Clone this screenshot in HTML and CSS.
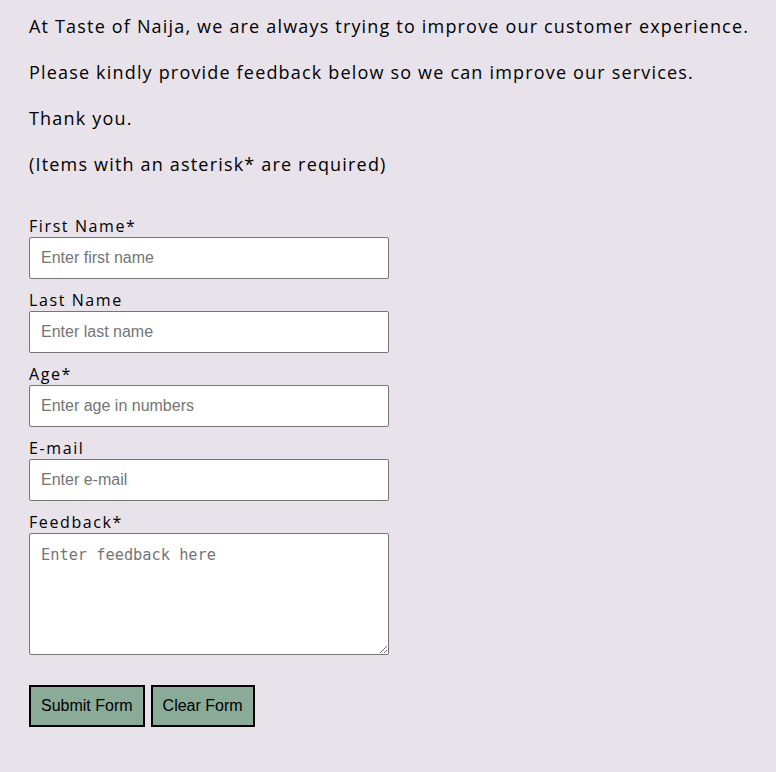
FILE: index.html
```html
<!DOCTYPE html>
<html lang="en">
<head>
<meta charset="utf-8">
<title>Feedback - Taste of Naija</title>
<link rel="stylesheet" href="styles.css">
</head>
<body>
<main class="page">
  <section class="intro">
    <p>At Taste of Naija, we are always trying to improve our customer experience.</p>
    <p>Please kindly provide feedback below so we can improve our services.</p>
    <p>Thank you.</p>
    <p>(Items with an asterisk* are required)</p>
  </section>
  <form class="form">
    <div class="field">
      <label for="fname">First Name*</label>
      <input id="fname" type="text" placeholder="Enter first name">
    </div>
    <div class="field">
      <label for="lname">Last Name</label>
      <input id="lname" type="text" placeholder="Enter last name">
    </div>
    <div class="field">
      <label for="age">Age*</label>
      <input id="age" type="text" placeholder="Enter age in numbers">
    </div>
    <div class="field">
      <label for="email">E-mail</label>
      <input id="email" type="text" placeholder="Enter e-mail">
    </div>
    <div class="field">
      <label for="feedback">Feedback*</label>
      <textarea id="feedback" placeholder="Enter feedback here"></textarea>
    </div>
    <div class="actions">
      <button type="button" class="btn">Submit Form</button>
      <button type="button" class="btn">Clear Form</button>
    </div>
  </form>
</main>
</body>
</html>
```
FILE: styles.css
```css
html, body {
  margin: 0;
  padding: 0;
  background: #e8e2ea;
}
body {
  font-family: "Open Sans", "DejaVu Sans", sans-serif;
  color: #000;
}
.page {
  padding: 14px 20px 40px 29px;
}
.intro p {
  margin: 0 0 21px 0;
  font-size: 18px;
  line-height: 25px;
  letter-spacing: 1.18px;
}
.form {
  margin-top: 38px;
  display: flex;
  flex-direction: column;
}
.field {
  display: flex;
  flex-direction: column;
  align-items: flex-start;
  margin-bottom: 10px;
}
.field label {
  font-size: 16px;
  line-height: 22px;
  letter-spacing: 1.6px;
}
.field input,
.field textarea {
  box-sizing: border-box;
  width: 360px;
  margin: 0;
  border: 1px solid #767676;
  border-radius: 2px;
  background: #fff;
}
.field input {
  height: 42px;
  padding: 0 11px;
  font-family: "Liberation Sans", Arial, sans-serif;
  font-size: 16px;
}
.field textarea {
  height: 122px;
  padding: 12px 11px;
  font-family: "DejaVu Sans Mono", monospace;
  font-size: 15.3px;
  resize: vertical;
}
.field input::placeholder,
.field textarea::placeholder {
  color: #757575;
}
.actions {
  display: flex;
  gap: 6px;
  margin-top: 20px;
}
.btn {
  height: 42px;
  padding: 0 10px;
  background: #8aab98;
  border: 2px solid #000;
  font-family: "Liberation Sans", Arial, sans-serif;
  font-size: 16px;
  color: #000;
}
```
